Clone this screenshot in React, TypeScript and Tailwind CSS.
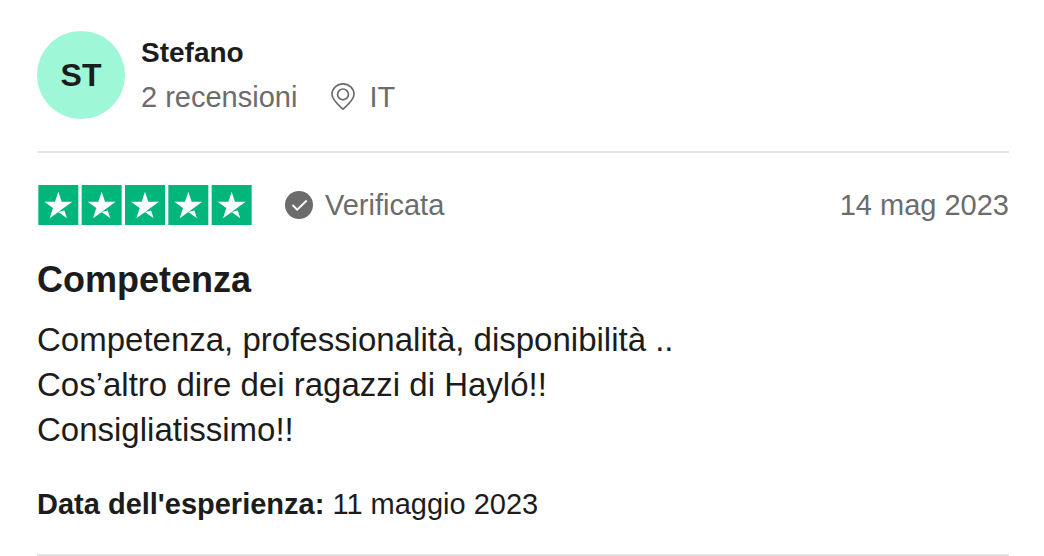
import React from 'react';

interface Review {
  initials: string;
  author: string;
  reviewCount: number;
  country: string;
  rating: number;
  publishedAt: string;
  title: string;
  lines: string[];
  experienceDate: string;
}

const review: Review = {
  initials: 'ST',
  author: 'Stefano',
  reviewCount: 2,
  country: 'IT',
  rating: 5,
  publishedAt: '14 mag 2023',
  title: 'Competenza',
  lines: [
    'Competenza, professionalità, disponibilità ..',
    'Cos’altro dire dei ragazzi di Hayló!!',
    'Consigliatissimo!!',
  ],
  experienceDate: '11 maggio 2023',
};

const PinIcon: React.FC = () => (
  <svg
    viewBox="0 0 28 28"
    className="h-7 w-7"
    fill="none"
    stroke="currentColor"
    strokeWidth="1.7"
    aria-hidden="true"
  >
    <path d="M14 26.2C10.2 22.6 3 17 3 11.2a11 10.4 0 0 1 22 0c0 5.800-7.200 11.400-11 15Z" />
    <circle cx="14" cy="11.4" r="5.4" />
  </svg>
);

const VerifiedIcon: React.FC = () => (
  <svg viewBox="0 0 28 28" className="h-7 w-7" aria-hidden="true">
    <circle cx="14" cy="14" r="14" fill="currentColor" />
    <path
      d="m7.500 14 4.700 4.700 9.500-9.200"
      fill="none"
      stroke="white"
      strokeWidth="1.8"
    />
  </svg>
);

const Stars: React.FC<{ rating: number }> = ({ rating }) => (
  <svg
    viewBox="0 0 512 96"
    className="h-10 w-[216px]"
    role="img"
    aria-label={`Valutata ${rating} stelle su 5`}
  >
    {[0, 1, 2, 3, 4].map((i) => (
      <g key={i} transform={`translate(${i * 104} 0)`}>
        <path d="M0 0h96v96H0z" fill={i < rating ? '#00b67a' : '#dcdce6'} />
        <path
          d="m48 64.7 14.6-3.7 6.1 18.8L48 64.7Zm33.6-24.3H55.9L48 16.2l-7.9 24.2H14.4l20.8 15-7.9 24.2 20.8-15 12.8-9.2 20.7-15Z"
          fill="white"
        />
      </g>
    ))}
  </svg>
);

const App: React.FC = () => {
  return (
    <article className="bg-white pt-[31px] pr-[35px] pl-[37px] font-['Liberation_Sans',Arial,sans-serif] text-[#1c1c1c]">
      <a href="#author" className="flex items-center gap-4">
        <span className="flex h-[88px] w-[88px] shrink-0 items-center justify-center rounded-full bg-[#9ef7d6] text-[32px] font-bold">
          {review.initials}
        </span>
        <span className="flex flex-col">
          <span className="text-[28px] leading-[44px] font-bold">
            {review.author}
          </span>
          <span className="flex items-center text-[29px] leading-[44px] text-[#6c6c6c]">
            <span>{review.reviewCount} recensioni</span>
            <span className="ml-8 flex items-center gap-3">
              <PinIcon />
              {review.country}
            </span>
          </span>
        </span>
      </a>

      <hr className="mt-8 border-t-2 border-[#e3e3e3]" />

      <div className="mt-8 flex items-center text-[29px] leading-10 text-[#6c6c6c]">
        <Stars rating={review.rating} />
        <button type="button" className="ml-8 flex items-center gap-3">
          <VerifiedIcon />
          Verificata
        </button>
        <time dateTime="2023-05-14" className="ml-auto">
          {review.publishedAt}
        </time>
      </div>

      <h2 className="mt-8 text-4xl leading-[46px] font-bold">
        <a href="#review">{review.title}</a>
      </h2>

      <p className="mt-[14px] text-[33px] leading-[45px]">
        {review.lines.map((line) => (
          <span key={line} className="block">
            {line}
          </span>
        ))}
      </p>

      <p className="mt-8 text-[29px] leading-10">
        <strong>Data dell&apos;esperienza:</strong> {review.experienceDate}
      </p>

      <hr className="mt-[30px] border-t-2 border-[#e3e3e3]" />
    </article>
  );
};

export default App;
